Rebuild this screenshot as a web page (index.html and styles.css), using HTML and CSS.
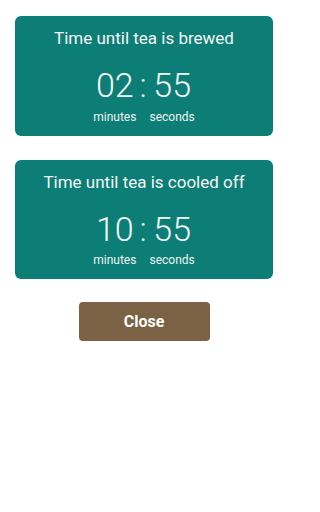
FILE: index.html
```html
<!DOCTYPE html>
<html lang="en">
<head>
<meta charset="utf-8">
<meta name="viewport" content="width=288">
<title>Tea timer</title>
<link rel="stylesheet" href="styles.css">
</head>
<body>
<main class="page">
  <section class="card">
    <h2 class="card-title">Time until tea is brewed</h2>
    <div class="timer">
      <div class="unit">
        <span class="value">02</span>
        <span class="label">minutes</span>
      </div>
      <span class="colon">:</span>
      <div class="unit">
        <span class="value">55</span>
        <span class="label">seconds</span>
      </div>
    </div>
  </section>
  <section class="card">
    <h2 class="card-title">Time until tea is cooled off</h2>
    <div class="timer">
      <div class="unit">
        <span class="value">10</span>
        <span class="label">minutes</span>
      </div>
      <span class="colon">:</span>
      <div class="unit">
        <span class="value">55</span>
        <span class="label">seconds</span>
      </div>
    </div>
  </section>
  <button class="close-btn" type="button">Close</button>
</main>
</body>
</html>
```

FILE: styles.css
```css
html, body {
  margin: 0;
  padding: 0;
  background: #ffffff;
}

body {
  font-family: Roboto, "Liberation Sans", sans-serif;
  color: #ffffff;
}

.page {
  box-sizing: border-box;
  width: 288px;
  display: flex;
  flex-direction: column;
  align-items: stretch;
  gap: 24px;
  padding: 16px 15px;
}

.card {
  background: #0c7e75;
  border-radius: 6px;
  padding: 12px 0;
  display: flex;
  flex-direction: column;
  align-items: center;
}

.card-title {
  margin: 0 0 17px;
  font-size: 17px;
  line-height: 20px;
  font-weight: 400;
  color: #f4f7f6;
}

.timer {
  display: flex;
  align-items: flex-start;
  justify-content: center;
}

.unit {
  display: flex;
  flex-direction: column;
  align-items: center;
}

.value,
.colon {
  font-size: 34px;
  line-height: 40px;
  font-weight: 300;
  color: #f4f7f6;
}

.colon {
  margin: 0 3px;
}

.label {
  margin-top: 4.6px;
  font-size: 12px;
  line-height: 14px;
  color: #eef3f2;
}

.close-btn {
  align-self: center;
  margin-top: -1px;
  width: 131px;
  height: 39px;
  border: none;
  border-radius: 4px;
  background: #7b6244;
  color: #ffffff;
  font-family: Roboto, "Liberation Sans", sans-serif;
  font-size: 16px;
  font-weight: 700;
  cursor: pointer;
}
```
